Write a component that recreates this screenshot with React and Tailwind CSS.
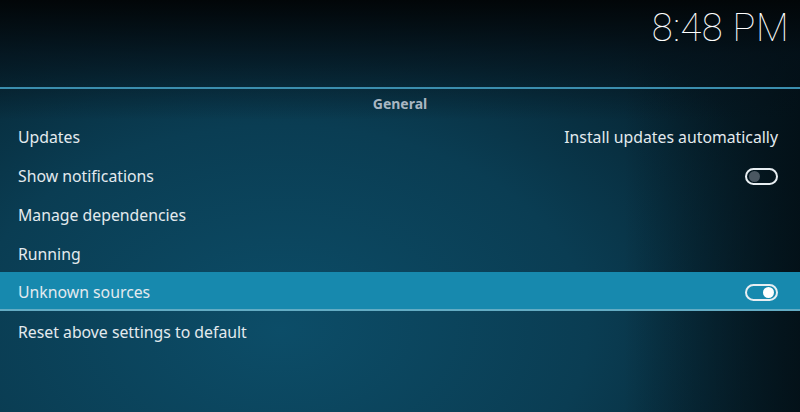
import React from 'react';

const rows = [
  { label: 'Updates', value: 'Install updates automatically' },
  { label: 'Show notifications', toggle: false },
  { label: 'Manage dependencies' },
  { label: 'Running' },
  { label: 'Unknown sources', toggle: true, active: true },
  { label: 'Reset above settings to default' },
];

const Toggle = ({ on }) => (
  <span className="flex h-[17px] w-[33px] items-center rounded-full border-2 border-[#e8eef2] px-[2px]">
    <span
      className={`h-[11px] w-[11px] rounded-full ${on ? 'ml-auto bg-white' : 'bg-[#4a5761]'}`}
    />
  </span>
);

const App = () => {
  return (
    <div
      className="relative h-[412px] w-[800px] overflow-hidden bg-[#0b3c52] text-[#e3eaee]"
      style={{ fontFamily: '"Noto Sans", "Open Sans", sans-serif' }}
    >
      {/* fundo em camadas */}
      <div className="absolute inset-0 bg-[radial-gradient(ellipse_70%_90%_at_35%_80%,#0c4d68_0%,#0a3d53_55%,#06222f_100%)]" />
      <div className="absolute inset-0 bg-[linear-gradient(to_left,rgba(3,14,20,0.85)_0%,rgba(3,14,20,0)_22%)]" />
      <div className="absolute inset-x-0 top-0 h-[120px] bg-[linear-gradient(to_bottom,#020608_0%,rgba(4,16,24,0.7)_45%,rgba(4,16,24,0)_100%)]" />

      <div className="relative flex flex-col">
        <div className="flex h-[87px] items-start justify-end pr-[11px] pt-[4px]">
          <span
            className="text-[38px] font-thin leading-[48px] tracking-[0.5px] text-white"
            style={{ fontFamily: 'Roboto, "Noto Sans", sans-serif' }}
          >
            8:48 PM
          </span>
        </div>
        <div className="h-[2px] bg-[#3b8eae]" />
        <div className="flex h-[27px] items-center justify-center pt-[2px] text-[14px] font-bold text-[#a9b6c2]">
          General
        </div>
        {rows.map((row, i) => (
          <div
            key={i}
            className={`flex h-[39px] items-center justify-between pl-[18px] pr-[22px] pt-[4px] text-[15.8px] ${
              row.active ? 'border-b-2 border-[#63acc4] bg-[#1789ae]' : ''
            }`}
          >
            <span>{row.label}</span>
            {row.value && <span>{row.value}</span>}
            {row.toggle !== undefined && <Toggle on={row.toggle} />}
          </div>
        ))}
      </div>
    </div>
  );
};

export default App;
